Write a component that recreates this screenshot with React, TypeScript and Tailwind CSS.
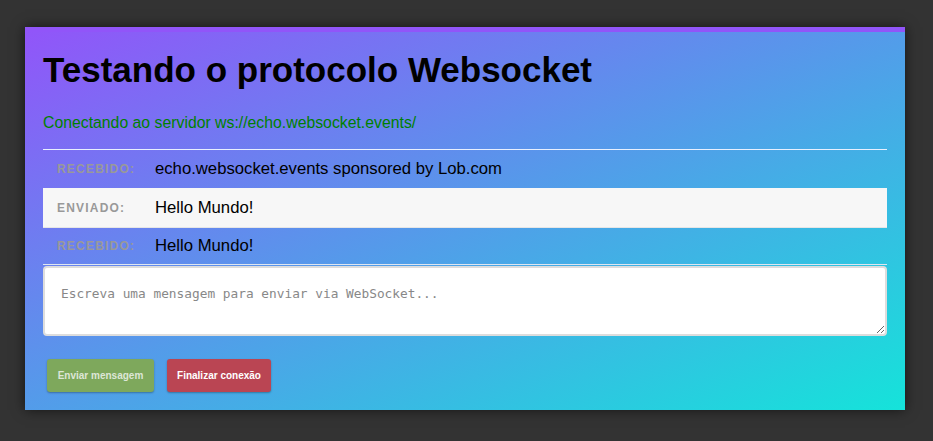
export default function App() {
  const messages = [
    { type: 'received', text: 'echo.websocket.events sponsored by Lob.com' },
    { type: 'sent', text: 'Hello Mundo!' },
    { type: 'received', text: 'Hello Mundo!' },
  ];

  return (
    <div className="min-h-screen w-full bg-[#333333] pt-[27px] pl-[25px]" style={{ fontFamily: '"Liberation Sans", Arial, sans-serif' }}>
      {/* Card */}
      <div className="w-[880px] h-[383px] border-t-[5px] border-[#9155f9] bg-linear-to-br/srgb from-[#9155f9] to-[#15e3da] px-[18px] pt-[14px] shadow-[0_0_12px_rgba(0,0,0,0.6)]">
        <h1 className="text-[35px] font-bold leading-[48px] text-black">Testando o protocolo Websocket</h1>
        <p className="mt-[19px] text-[15.8px] leading-[20px] text-[#008000]">Conectando ao servidor ws://echo.websocket.events/</p>

        {/* Message list */}
        <ul className="mt-[16px] border-t border-[#e8f0ff]">
          {messages.map((m, i) => {
            const last = i === messages.length - 1;
            const sent = m.type === 'sent';
            return (
              <li
                key={i}
                className={`flex items-center px-[14px] ${sent ? 'h-[40px] bg-[#f7f7f7] border-b border-[#e6e6e6]' : last ? 'h-[37px] border-b border-[#dfe6f0]' : 'h-[38px]'}`}
              >
                <span className="w-[98px] shrink-0 text-[12px] font-bold tracking-[1.2px] text-[#999999]">
                  {sent ? 'ENVIADO:' : 'RECEBIDO:'}
                </span>
                <span className="text-[16.7px] text-black">{m.text}</span>
              </li>
            );
          })}
        </ul>

        <textarea
          className="mt-px block w-full h-[70px] rounded-[4px] border-2 border-[#dddddd] bg-white px-[16px] py-[16px] text-[12.8px] text-black placeholder:text-[#888888] outline-none"
          style={{ fontFamily: '"DejaVu Sans Mono", monospace' }}
          placeholder="Escreva uma mensagem para enviar via WebSocket..."
        />

        <div className="mt-[23px] flex gap-[13px] pl-[4px]">
          <button className="h-[33px] w-[107px] rounded-[3px] bg-[#7ea85c] text-[10px] font-bold text-[#dde6d6] shadow-[0_1px_2px_rgba(0,0,0,0.3)]">
            Enviar mensagem
          </button>
          <button className="h-[33px] w-[104px] rounded-[3px] bg-[#ba4553] text-[10px] font-bold text-white shadow-[0_1px_2px_rgba(0,0,0,0.3)]">
            Finalizar conexão
          </button>
        </div>
      </div>
    </div>
  );
}
